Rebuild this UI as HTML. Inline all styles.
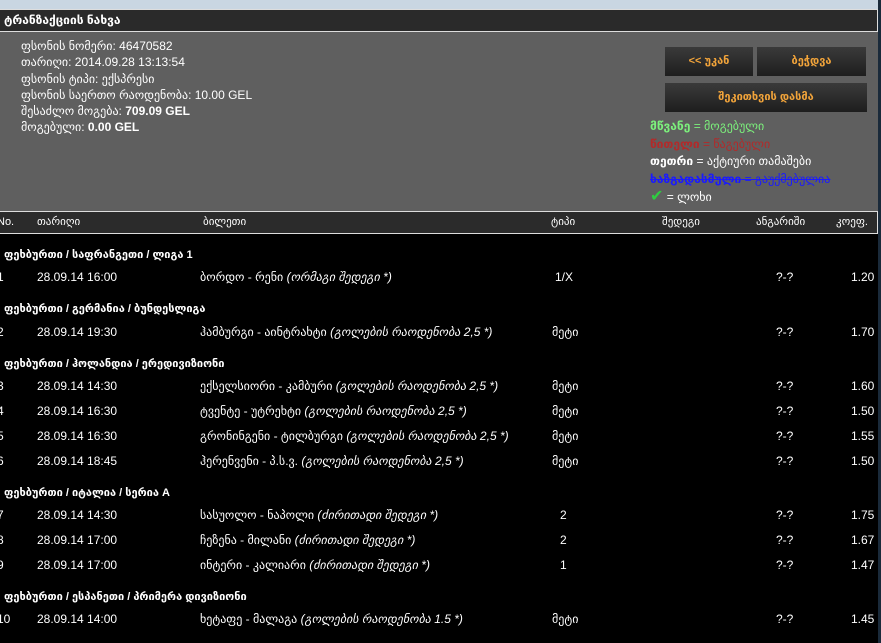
<!DOCTYPE html>
<html><head><meta charset="utf-8"><style>
*{margin:0;padding:0;box-sizing:border-box}
body{width:881px;height:643px;overflow:hidden;background:#000;font-family:"Liberation Sans","DejaVu Sans",sans-serif;font-size:12px;color:#fff;position:relative}
.a{position:absolute;white-space:nowrap}
.tabs{left:0;top:0;width:881px;height:9px;background:#c9d6e2}
.title{left:0;top:9px;width:878px;height:23px;background:#2a2a2a;border:1px solid #ddd;border-left:none;font-weight:bold;padding:3px 0 0 4px;font-size:12px}
.panel{left:0;top:32px;width:878px;height:179px;background:#5f5f5f}
.info{left:21px;top:38px;line-height:16.3px;font-size:12px;color:#fff}
.btn{background:linear-gradient(#3a3a3a,#1e1e1e);color:#f2a43a;font-weight:bold;font-size:11px;text-align:center;line-height:28px}
.hdr{left:0;top:211px;width:878px;height:23px;background:#2b2b2b;border:1px solid #ddd;border-left:none;font-size:11px;line-height:21px}
.g{font-weight:bold;font-size:11px;left:4px}
.r{font-size:12px}
i{font-style:italic}
</style></head><body>
<div class="a tabs"></div>
<div class="a" style="left:878px;top:0;width:3px;height:643px;background:#1a2a3a"></div>
<div class="a title">ტრანზაქციის ნახვა</div>
<div class="a panel"></div>
<div class="a info">ფსონის ნომერი: 46470582<br>თარიღი: 2014.09.28 13:13:54<br>ფსონის ტიპი: ექსპრესი<br>ფსონის საერთო რაოდენობა: 10.00 GEL<br>შესაძლო მოგება: <b>709.09 GEL</b><br>მოგებული: <b>0.00 GEL</b></div>
<div class="a btn" style="left:665px;top:47px;width:88px;height:29px">&lt;&lt; უკან</div>
<div class="a btn" style="left:757px;top:47px;width:109px;height:29px">ბეჭდვა</div>
<div class="a btn" style="left:665px;top:83px;width:202px;height:29px">შეკითხვის დასმა</div>
<div class="a" style="left:650px;top:118px;line-height:17.5px;font-size:12px">
<span style="color:#7cf07c"><b>მწვანე</b> = მოგებული</span><br>
<span style="color:#b22a2a"><b>წითელი</b> = წაგებული</span><br>
<span style="color:#fff"><b>თეთრი</b> = აქტიური თამაშები</span><br>
<span style="color:#1a1aff;text-decoration:line-through"><b>ხაზგადასმული</b> = გაუქმებულია</span><br>
<span style="color:#2ecc40;font-size:16px;font-weight:bold">✔</span> = ლოხი</div>
<div class="a hdr">
<span class="a" style="left:-3px">No.</span><span class="a" style="left:37px">თარიღი</span><span class="a" style="left:203px">ბილეთი</span><span class="a" style="left:551px">ტიპი</span><span class="a" style="left:662px">შედეგი</span><span class="a" style="left:756px">ანგარიში</span><span class="a" style="left:836px">კოეფ.</span></div>

<div class="a g" style="top:248px">ფეხბურთი / საფრანგეთი / ლიგა 1</div>
<div class="a g" style="top:302px">ფეხბურთი / გერმანია / ბუნდესლიგა</div>
<div class="a g" style="top:357px">ფეხბურთი / ჰოლანდია / ერედივიზიონი</div>
<div class="a g" style="top:486px">ფეხბურთი / იტალია / სერია A</div>
<div class="a g" style="top:590px">ფეხბურთი / ესპანეთი / პრიმერა დივიზიონი</div>

<div class="a r" style="top:270px;left:-3px">1</div><div class="a r" style="top:270px;left:37px">28.09.14 16:00</div><div class="a r" style="top:270px;left:200px">ბორდო - რენი <i>(ორმაგი შედეგი *)</i></div><div class="a r" style="top:270px;left:555px">1/X</div><div class="a r" style="top:270px;left:776px">?-?</div><div class="a r" style="top:270px;left:851px">1.20</div>

<div class="a r" style="top:325px;left:-3px">2</div><div class="a r" style="top:325px;left:37px">28.09.14 19:30</div><div class="a r" style="top:325px;left:200px">ჰამბურგი - აინტრახტი <i>(გოლების რაოდენობა 2,5 *)</i></div><div class="a r" style="top:325px;left:552px">მეტი</div><div class="a r" style="top:325px;left:776px">?-?</div><div class="a r" style="top:325px;left:851px">1.70</div>

<div class="a r" style="top:379px;left:-3px">3</div><div class="a r" style="top:379px;left:37px">28.09.14 14:30</div><div class="a r" style="top:379px;left:200px">ექსელსიორი - კამბური <i>(გოლების რაოდენობა 2,5 *)</i></div><div class="a r" style="top:379px;left:552px">მეტი</div><div class="a r" style="top:379px;left:776px">?-?</div><div class="a r" style="top:379px;left:851px">1.60</div>

<div class="a r" style="top:404px;left:-3px">4</div><div class="a r" style="top:404px;left:37px">28.09.14 16:30</div><div class="a r" style="top:404px;left:200px">ტვენტე - უტრეხტი <i>(გოლების რაოდენობა 2,5 *)</i></div><div class="a r" style="top:404px;left:552px">მეტი</div><div class="a r" style="top:404px;left:776px">?-?</div><div class="a r" style="top:404px;left:851px">1.50</div>

<div class="a r" style="top:429px;left:-3px">5</div><div class="a r" style="top:429px;left:37px">28.09.14 16:30</div><div class="a r" style="top:429px;left:200px">გრონინგენი - ტილბურგი <i>(გოლების რაოდენობა 2,5 *)</i></div><div class="a r" style="top:429px;left:552px">მეტი</div><div class="a r" style="top:429px;left:776px">?-?</div><div class="a r" style="top:429px;left:851px">1.55</div>

<div class="a r" style="top:454px;left:-3px">6</div><div class="a r" style="top:454px;left:37px">28.09.14 18:45</div><div class="a r" style="top:454px;left:200px">ჰერენვენი - პ.ს.ვ. <i>(გოლების რაოდენობა 2,5 *)</i></div><div class="a r" style="top:454px;left:552px">მეტი</div><div class="a r" style="top:454px;left:776px">?-?</div><div class="a r" style="top:454px;left:851px">1.50</div>

<div class="a r" style="top:508px;left:-3px">7</div><div class="a r" style="top:508px;left:37px">28.09.14 14:30</div><div class="a r" style="top:508px;left:200px">სასუოლო - ნაპოლი <i>(ძირითადი შედეგი *)</i></div><div class="a r" style="top:508px;left:560px">2</div><div class="a r" style="top:508px;left:776px">?-?</div><div class="a r" style="top:508px;left:851px">1.75</div>

<div class="a r" style="top:533px;left:-3px">8</div><div class="a r" style="top:533px;left:37px">28.09.14 17:00</div><div class="a r" style="top:533px;left:200px">ჩეზენა - მილანი <i>(ძირითადი შედეგი *)</i></div><div class="a r" style="top:533px;left:560px">2</div><div class="a r" style="top:533px;left:776px">?-?</div><div class="a r" style="top:533px;left:851px">1.67</div>

<div class="a r" style="top:558px;left:-3px">9</div><div class="a r" style="top:558px;left:37px">28.09.14 17:00</div><div class="a r" style="top:558px;left:200px">ინტერი - კალიარი <i>(ძირითადი შედეგი *)</i></div><div class="a r" style="top:558px;left:560px">1</div><div class="a r" style="top:558px;left:776px">?-?</div><div class="a r" style="top:558px;left:851px">1.47</div>

<div class="a r" style="top:612px;left:-3px">10</div><div class="a r" style="top:612px;left:37px">28.09.14 14:00</div><div class="a r" style="top:612px;left:200px">ხეტაფე - მალაგა <i>(გოლების რაოდენობა 1.5 *)</i></div><div class="a r" style="top:612px;left:552px">მეტი</div><div class="a r" style="top:612px;left:776px">?-?</div><div class="a r" style="top:612px;left:851px">1.45</div>
</body></html>
